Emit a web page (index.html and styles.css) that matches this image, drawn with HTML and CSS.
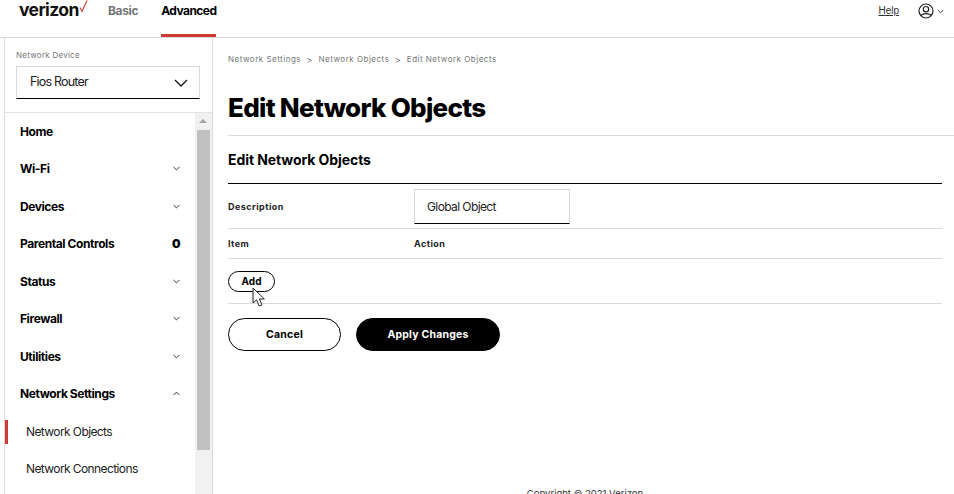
FILE: index.html
```html
<!DOCTYPE html>
<html lang="en">
<head>
<meta charset="utf-8">
<title>Edit Network Objects</title>
<link rel="stylesheet" href="styles.css">
</head>
<body>
<header class="topbar">
  <div class="logo"><span class="logo-word">verizon</span><svg class="logo-check" width="9" height="13" viewBox="0 0 9 13"><path d="M1 7.5 L3 11.5 L8 0.5" fill="none" stroke="#cd3a32" stroke-width="1.1"/></svg></div>
  <nav class="tabs">
    <a class="tab">Basic</a>
    <a class="tab tab-active">Advanced</a>
  </nav>
  <div class="top-right">
    <a class="help">Help</a>
    <svg class="user" width="16" height="16" viewBox="0 0 16 16"><circle cx="8" cy="8" r="7" fill="none" stroke="#222" stroke-width="1.2"/><circle cx="8" cy="6.2" r="2.7" fill="none" stroke="#222" stroke-width="1.2"/><path d="M3 13 C4 9.8 12 9.8 13 13" fill="none" stroke="#222" stroke-width="1.2"/></svg>
    <svg class="caret" width="7" height="5" viewBox="0 0 7 5"><path d="M0.7 1 L3.5 3.8 L6.3 1" fill="none" stroke="#444" stroke-width="1"/></svg>
  </div>
</header>
<div class="shell">
  <aside class="sidebar">
    <div class="device">
      <div class="device-label">Network Device</div>
      <div class="select"><span class="select-text">Fios Router</span>
        <svg width="14" height="8" viewBox="0 0 14 8"><path d="M1 1 L7 7 L13 1" fill="none" stroke="#111" stroke-width="1.3"/></svg>
      </div>
    </div>
    <div class="menu-wrap">
      <ul class="menu">
        <li class="item"><span>Home</span></li>
        <li class="item"><span>Wi-Fi</span><svg class="chev" width="7" height="5" viewBox="0 0 7 5"><path d="M0.6 1 L3.5 3.9 L6.4 1" fill="none" stroke="#333"/></svg></li>
        <li class="item"><span>Devices</span><svg class="chev" width="7" height="5" viewBox="0 0 7 5"><path d="M0.6 1 L3.5 3.9 L6.4 1" fill="none" stroke="#333"/></svg></li>
        <li class="item"><span>Parental Controls</span><b class="count">0</b></li>
        <li class="item"><span>Status</span><svg class="chev" width="7" height="5" viewBox="0 0 7 5"><path d="M0.6 1 L3.5 3.9 L6.4 1" fill="none" stroke="#333"/></svg></li>
        <li class="item"><span>Firewall</span><svg class="chev" width="7" height="5" viewBox="0 0 7 5"><path d="M0.6 1 L3.5 3.9 L6.4 1" fill="none" stroke="#333"/></svg></li>
        <li class="item"><span>Utilities</span><svg class="chev" width="7" height="5" viewBox="0 0 7 5"><path d="M0.6 1 L3.5 3.9 L6.4 1" fill="none" stroke="#333"/></svg></li>
        <li class="item"><span>Network Settings</span><svg class="chev" width="7" height="5" viewBox="0 0 7 5"><path d="M0.6 4 L3.5 1.1 L6.4 4" fill="none" stroke="#333"/></svg></li>
        <li class="item sub sub-active"><span>Network Objects</span></li>
        <li class="item sub"><span>Network Connections</span></li>
      </ul>
      <div class="scrollbar">
        <div class="scroll-up"></div>
        <div class="scroll-thumb"></div>
      </div>
    </div>
  </aside>
  <main class="content">
    <div class="crumbs"><span>Network Settings</span><i>&gt;</i><span>Network Objects</span><i>&gt;</i><span>Edit Network Objects</span></div>
    <h1 class="title">Edit Network Objects</h1>
    <section class="panel">
      <h2 class="panel-title">Edit Network Objects</h2>
      <div class="row row-desc"><div class="col-a">Description</div><div class="input">Global Object</div></div>
      <div class="row row-head"><div class="col-a">Item</div><div class="col-b">Action</div></div>
      <div class="row-add"><button class="btn-add">Add</button>
        <svg class="cursor" width="14" height="20" viewBox="0 0 14 20"><path d="M1 1 L1 16 L4.6 12.8 L7.2 19 L10 17.9 L7.4 12 L12.4 12 Z" fill="#fff" stroke="#222" stroke-width="1"/></svg>
      </div>
      <div class="actions"><button class="btn btn-outline">Cancel</button><button class="btn btn-solid">Apply Changes</button></div>
    </section>
    <footer class="copy">Copyright © 2021 Verizon</footer>
  </main>
</div>
</body>
</html>
```
FILE: styles.css
```css
* { box-sizing: border-box; }
html, body { margin: 0; height: 494px; overflow: hidden; background: #fff; }
body { font-family: Inter, "Liberation Sans", sans-serif; color: #000; }
ul { list-style: none; margin: 0; padding: 0; }

.topbar { position: relative; height: 38px; border-bottom: 1px solid #d8dada; display: flex; padding-left: 19px; }
.logo { width: 89px; display: flex; align-items: flex-start; }
.logo-word { font-size: 17.5px; font-weight: 700; line-height: 17px; letter-spacing: -0.6px; color: #111; margin-top: 1px; }
.logo-check { margin-left: 0; margin-top: 0; }
.tabs { display: flex; gap: 23px; }
.tab { height: 37px; font-size: 12px; font-weight: 700; line-height: 21px; color: #747676; letter-spacing: -0.35px; }
.tab-active { color: #000; border-bottom: 3px solid #cd3a32; width: 55px; letter-spacing: -0.55px; }
.top-right { margin-left: auto; display: flex; align-items: flex-start; padding: 3px 10px 0 0; }
.help { font-size: 10px; line-height: 16px; color: #333; text-decoration: underline; margin-right: 19px; font-family: "Liberation Sans", sans-serif; }
.user { display: block; }
.caret { margin: 6px 0 0 3px; }

.shell { display: flex; height: 456px; }
.sidebar { width: 209px; margin-left: 4px; border-left: 1px solid #d8dada; border-right: 1px solid #d8dada; flex: none; display: flex; flex-direction: column; }
.device { height: 75px; padding: 12px 0 0 11px; border-bottom: 1px solid #e4e4e4; }
.device-label { font-size: 8px; line-height: 11px; color: #747676; letter-spacing: 0.25px; margin-bottom: 5px; }
.select { width: 184px; height: 33px; border: 1px solid #d8dada; border-bottom: 1px solid #000; display: flex; align-items: center; justify-content: space-between; padding: 0 11px 0 13px; font-size: 12.5px; letter-spacing: -0.8px; color: #222; }
.select-text { margin-top: -2px; }
.menu-wrap { position: relative; flex: 1; overflow: hidden; }
.item { height: 37.5px; display: flex; align-items: center; justify-content: space-between; padding: 0 32px 0 15px; font-size: 12px; font-weight: 700; letter-spacing: -0.42px; color: #000; }
.item:first-child { height: 37px; }
.chev { margin-right: 0; }
.count { font-size: 12px; margin-right: 0; }
.sub { padding-left: 21px; font-weight: 400; letter-spacing: -0.6px; color: #222; position: relative; }
.sub-active::before { content: ""; position: absolute; left: 0; top: 7px; width: 3px; height: 24px; background: #cd3a32; }
.scrollbar { position: absolute; top: 0; right: 0; width: 17px; bottom: 0; background: #f1f1f1; }
.scroll-up { height: 17px; position: relative; }
.scroll-up::after { content: ""; position: absolute; left: 4px; top: 6px; border-left: 4px solid transparent; border-right: 4px solid transparent; border-bottom: 4px solid #a3a3a3; }
.scroll-thumb { height: 320px; background: #c1c1c1; margin-left: 2px; width: 13px; }

.content { flex: 1; min-width: 0; padding: 0 12px 0 15px; }
.crumbs { display: flex; align-items: center; height: 14px; margin: 14px 0 0; font-size: 8px; letter-spacing: 0.5px; color: #747676; }
.crumbs i { font-style: normal; margin: 0 5.5px; font-size: 9px; }
.title { margin: 25px -12px 0 0; height: 45px; font-size: 26px; line-height: 33px; font-weight: 800; letter-spacing: -0.72px; border-bottom: 1px solid #d8dada; }
.panel-title { margin: 0; height: 48px; border-bottom: 1px solid #000; font-size: 14px; font-weight: 700; letter-spacing: -0.08px; line-height: 48px; }
.row { display: flex; align-items: center; font-size: 9px; font-weight: 700; letter-spacing: 0.45px; color: #222; border-bottom: 1px solid #d8dada; }
.col-a { width: 186px; }
.row-desc { height: 45px; }
.input { width: 156px; height: 35px; border: 1px solid #d8dada; border-bottom: 1px solid #000; padding-left: 12px; display: flex; align-items: center; font-size: 12px; font-weight: 400; letter-spacing: -0.6px; color: #222; margin-top: 1px; }
.row-head { height: 30px; }
.row-add { position: relative; height: 45px; border-bottom: 1px solid #d8dada; padding-top: 12px; }
.btn-add { display: block; width: 47px; height: 21px; border: 1px solid #000; border-radius: 11px; background: #fff; padding: 0; font: 700 10px/19px Inter, sans-serif; letter-spacing: 0.1px; color: #000; }
.cursor { position: absolute; left: 24px; top: 28px; }
.actions { display: flex; gap: 15px; padding-top: 14px; }
.btn { width: 113px; height: 33px; border-radius: 17px; border: 1px solid #000; font: 700 10.5px Inter, sans-serif; letter-spacing: 0.2px; padding: 0; }
.btn-outline { background: #fff; color: #000; }
.btn-solid { background: #000; color: #fff; width: 144px; }
.copy { margin-top: 137px; text-align: center; font-size: 9.5px; color: #333; width: 714px; }
```
